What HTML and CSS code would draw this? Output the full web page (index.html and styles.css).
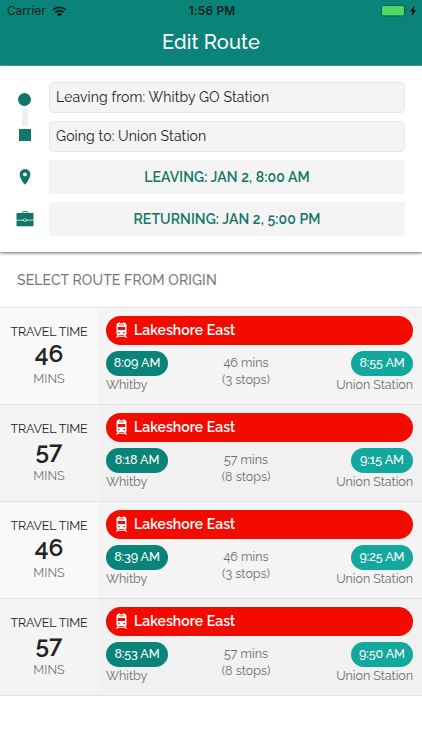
FILE: index.html
```html
<!doctype html>
<html lang="en">
<head>
  <meta charset="UTF-8" />
  <meta name="viewport" content="width=device-width, initial-scale=1.0" />
  <title>Edit Route</title>
  <link rel="stylesheet" href="styles.css">
</head>
<body>
  <svg class="sprite" width="0" height="0">
    <symbol id="train" viewBox="0 0 13 16">
      <path fill-rule="evenodd" d="M1.5 3q0-2 2-2.3L5 .3v.9h3V.3l1.5.4q2 .3 2 2.300v8.800a1.500 1.500 0 0 1-1.500 1.500H3a1.500 1.500 0 0 1-1.500-1.500zM4 2.500v.8h5v-.8zM2.900 5v3h7.200V5zM3.100 10v1.300h1.500V10zM8.400 10v1.300h1.500V10z" />
      <path d="M2.600 13h1.500l-1.900 2.700H.8zM8.900 13h1.500l1.800 2.700h-1.400zM3 14h7v.8H3z" />
    </symbol>
  </svg>

  <header class="header">
    <div class="status-bar">
      <div class="carrier">
        <span>Carrier</span>
        <svg width="15" height="11" viewBox="0 0 15 11">
          <path d="M7.500 10.600 5.200 8.200a3.300 3.300 0 0 1 4.600 0z" />
          <path class="wave" d="M3.400 6.400a5.900 5.900 0 0 1 8.200 0M1.100 3.900a9.200 9.200 0 0 1 12.800 0" />
        </svg>
      </div>
      <div class="clock">1:56 PM</div>
      <div class="power">
        <svg width="36" height="12" viewBox="0 0 36 12">
          <rect x=".5" y=".5" width="23" height="10.400" rx="2" fill="#4cd964" stroke="#075c52" />
          <path d="M25 3.800c1.200.3 1.200 3.400 0 3.800z" fill="#075c52" />
          <path d="M33.400 1 29 6.500h2.600L30.600 11 35 5.200h-2.600z" fill="#000" />
        </svg>
      </div>
    </div>
    <h1>Edit Route</h1>
  </header>

  <form class="trip-form">
    <div class="stations">
      <div class="markers">
        <span class="dot"></span>
        <span class="line"></span>
        <span class="square"></span>
      </div>
      <div class="station-fields">
        <div class="field">Leaving from: Whitby GO Station</div>
        <div class="field">Going to: Union Station</div>
      </div>
    </div>
    <div class="form-row">
      <svg width="12" height="16" viewBox="0 0 12 16">
        <path fill-rule="evenodd" d="M6 0a5.400 5.400 0 0 0-5.400 5.400C.6 9.500 6 15.800 6 15.800s5.400-6.300 5.400-10.400A5.400 5.400 0 0 0 6 0zM6 3.500a1.900 1.900 0 1 1 0 3.800 1.900 1.900 0 0 1 0-3.800z" />
      </svg>
      <button type="button">LEAVING: JAN 2, 8:00 AM</button>
    </div>
    <div class="form-row">
      <svg width="18" height="16" viewBox="0 0 18 16">
        <path d="M6 2.500V1.500C6 .3 12 .3 12 1.500v1" fill="none" stroke="#127568" />
        <path d="M1.200 2h15.600q.7 0 .7.700v6h-6.700a1.900 1.900 0 0 0-3.600 0H.5v-6q0-.7.7-.7zM.5 9.500h6.700a1.900 1.900 0 0 0 3.600 0h6.700v5q0 .7-.7.700H1.200q-.7 0-.7-.7z" />
        <circle cx="9" cy="9.100" r="1.100" />
      </svg>
      <button type="button">RETURNING: JAN 2, 5:00 PM</button>
    </div>
  </form>

  <h2>SELECT ROUTE FROM ORIGIN</h2>

  <div class="routes" id="routes"></div>

  <script>
    const routes = [
      { mins: 46, stops: 3, depart: '8:09 AM', arrive: '8:55 AM' },
      { mins: 57, stops: 8, depart: '8:18 AM', arrive: '9:15 AM' },
      { mins: 46, stops: 3, depart: '8:39 AM', arrive: '9:25 AM' },
      { mins: 57, stops: 8, depart: '8:53 AM', arrive: '9:50 AM' },
    ];

    document.getElementById('routes').innerHTML = routes.map((route) => `
      <div class="route">
        <div class="travel-time">
          <div class="label">TRAVEL TIME</div>
          <div class="minutes">${route.mins}</div>
          <div class="unit">MINS</div>
        </div>
        <div class="details">
          <div class="line-name">
            <svg width="13" height="16"><use href="#train" /></svg>
            <span>Lakeshore East</span>
          </div>
          <div class="times">
            <div class="stop">
              <span class="time">${route.depart}</span>
              <span class="place">Whitby</span>
            </div>
            <div class="duration">${route.mins} mins<br />(${route.stops} stops)</div>
            <div class="stop arrival">
              <span class="time">${route.arrive}</span>
              <span class="place">Union Station</span>
            </div>
          </div>
        </div>
      </div>`).join('');
  </script>
</body>
</html>
```

FILE: styles.css
```css
* {
  box-sizing: border-box;
  margin: 0;
  padding: 0;
}

body {
  font-family: Raleway, Lato, sans-serif;
  font-variant-numeric: oldstyle-nums;
  background: #fff;
  color: #222;
}

.sprite {
  display: block;
}

.header {
  height: 66px;
  background: #0a8478;
  border-bottom: 1px solid #54a89f;
}

.status-bar {
  display: grid;
  grid-template-columns: 1fr auto 1fr;
  align-items: center;
  height: 22px;
  padding: 0 5px 0 7px;
  font-family: Inter, sans-serif;
  font-size: 11.8px;
  color: #0b1f1d;
}

.carrier {
  display: flex;
  align-items: center;
  gap: 6px;
}

.carrier .wave {
  fill: none;
  stroke: #0b1f1d;
  stroke-width: 1.8;
}

.clock {
  font-weight: 600;
  letter-spacing: 0.2px;
}

.power {
  display: flex;
  justify-content: flex-end;
}

h1 {
  font-size: 20px;
  line-height: 40px;
  font-weight: 500;
  letter-spacing: 0.15px;
  text-align: center;
  color: #fff;
}

.trip-form {
  height: 186px;
  padding: 16px 17px 0 0;
  box-shadow: 0 1px 3px rgba(0, 0, 0, 0.6);
}

.stations,
.form-row {
  display: grid;
  grid-template-columns: 49px 1fr;
  justify-items: center;
}

.form-row {
  align-items: center;
  margin-top: 8px;
  fill: #127568;
}

.markers {
  display: flex;
  flex-direction: column;
  align-items: center;
  padding-top: 11px;
}

.dot {
  width: 13px;
  height: 13px;
  border-radius: 50%;
  background: #127568;
}

.line {
  width: 6px;
  height: 17px;
  margin: 3px 0;
  background: #eee;
}

.square {
  width: 12px;
  height: 12px;
  background: #127568;
}

.station-fields {
  display: grid;
  gap: 8px;
  width: 100%;
}

.field {
  height: 31px;
  padding-left: 6px;
  border: 1px solid #e6e6e6;
  border-radius: 5px;
  background: #f4f4f4;
  font-size: 14px;
  line-height: 28px;
  letter-spacing: 0.12px;
}

.form-row button {
  width: 100%;
  height: 34px;
  border: none;
  border-radius: 2px;
  background: #f4f4f4;
  font: inherit;
  font-size: 14px;
  font-weight: 600;
  letter-spacing: 0.1px;
  color: #127568;
}

h2 {
  height: 55px;
  padding-left: 17px;
  font-size: 14px;
  line-height: 56px;
  font-weight: 500;
  letter-spacing: 0.12px;
  color: #777;
}

.route {
  display: flex;
  height: 97px;
  border-top: 1px solid #e0e1e4;
  background: #f4f4f4;
}

.route:nth-child(even) {
  background: #f1f1f1;
}

.route:last-child {
  height: 98px;
  border-bottom: 1px solid #e0e1e4;
}

.travel-time {
  width: 98px;
  padding-top: 15px;
  background: #f9f9f9;
  text-align: center;
}

.route:nth-child(even) .travel-time {
  background: #f4f4f4;
}

.label {
  font-size: 12.5px;
  line-height: 18px;
  letter-spacing: -0.15px;
}

.minutes {
  font-size: 24.5px;
  line-height: 28px;
  font-weight: 600;
  margin: -1px 0 1px;
}

.unit {
  font-size: 12.5px;
  line-height: 20px;
  color: #777;
}

.details {
  flex: 1;
  padding: 8px 9px 0 8px;
}

.line-name {
  display: flex;
  align-items: center;
  gap: 6px;
  height: 29px;
  padding: 0 0 1px 9px;
  border-radius: 15px;
  background: #f40b00;
  color: #fff;
  fill: #fff;
  font-size: 14px;
  font-weight: 600;
  letter-spacing: 0.05px;
}

.times {
  display: grid;
  grid-template-columns: 110px 60px 1fr;
  padding-top: 6px;
}

.stop {
  display: flex;
  flex-direction: column;
  align-items: flex-start;
}

.time {
  width: 62px;
  height: 25px;
  border-radius: 13px;
  background: #0a8478;
  color: #fff;
  font-size: 12.5px;
  line-height: 24px;
  font-weight: 500;
  letter-spacing: -0.1px;
  text-align: center;
}

.arrival {
  align-items: flex-end;
}

.arrival .time {
  background: #12a89d;
}

.place {
  font-size: 12.5px;
  line-height: 18px;
  letter-spacing: -0.05px;
  color: #6c6c6c;
}

.duration {
  padding-top: 3px;
  font-size: 12.5px;
  line-height: 17px;
  text-align: center;
  color: #6c6c6c;
}
```
